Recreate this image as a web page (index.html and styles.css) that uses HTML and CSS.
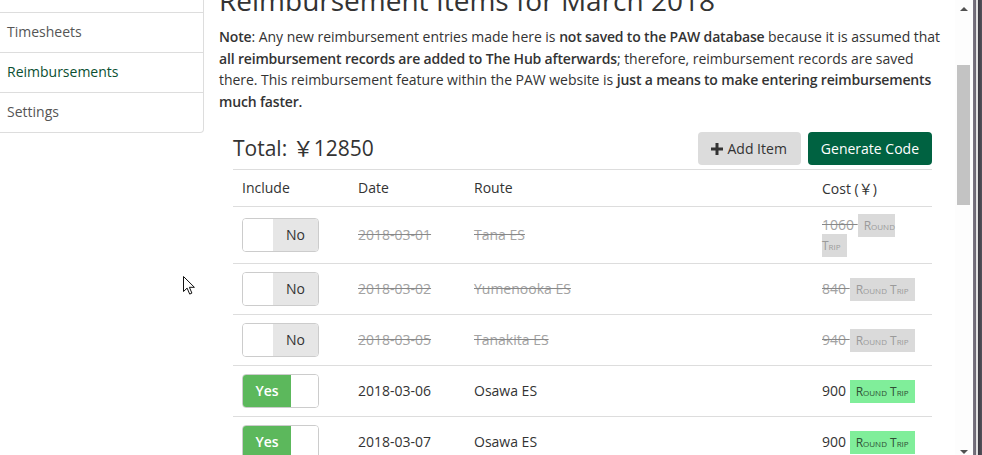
FILE: index.html
```html
<!DOCTYPE html>
<html lang="en">
<head>
<meta charset="utf-8">
<title>Reimbursements</title>
<link rel="stylesheet" href="styles.css">
</head>
<body>
<div class="window">
  <div class="viewport">
    <div class="page">
      <aside class="sidebar">
        <ul class="nav-list">
          <li class="nav-item nav-cut">Dashboard</li>
          <li class="nav-item">Timesheets</li>
          <li class="nav-item active">Reimbursements</li>
          <li class="nav-item last">Settings</li>
        </ul>
      </aside>
      <main class="main">
        <h1 class="title">Reimbursement Items for March 2018</h1>
        <p class="note"><b>Note</b>: Any new reimbursement entries made here is <b>not saved to the PAW database</b> because it is assumed that <b>all reimbursement records are added to The Hub afterwards</b>; therefore, reimbursement records are saved there. This reimbursement feature within the PAW website is <b>just a means to make entering reimbursements much faster.</b></p>
        <section class="panel">
          <div class="toolbar">
            <div class="total">Total: <span class="yen">￥</span>12850</div>
            <div class="actions">
              <button class="btn btn-default"><svg class="plus" viewBox="0 0 12 12" width="12" height="12"><path d="M4.5 0h3v4.5H12v3H7.5V12h-3V7.5H0v-3h4.5z" fill="#333"/></svg>Add Item</button>
              <button class="btn btn-primary">Generate Code</button>
            </div>
          </div>
          <table class="items">
            <thead>
              <tr><th class="c-inc">Include</th><th class="c-date">Date</th><th class="c-route">Route</th><th class="c-cost">Cost (<span class="yen">￥</span>)</th></tr>
            </thead>
            <tbody>
              <tr class="off">
                <td><div class="toggle"><span class="handle"></span><span class="t-off">No</span></div></td>
                <td><s>2018-03-01</s></td>
                <td><s>Tana ES</s></td>
                <td class="cost"><s>1060 </s><span class="label">Round Trip</span></td>
              </tr>
              <tr class="off">
                <td><div class="toggle"><span class="handle"></span><span class="t-off">No</span></div></td>
                <td><s>2018-03-02</s></td>
                <td><s>Yumenooka ES</s></td>
                <td class="cost"><s>840 </s><span class="label">Round Trip</span></td>
              </tr>
              <tr class="off">
                <td><div class="toggle"><span class="handle"></span><span class="t-off">No</span></div></td>
                <td><s>2018-03-05</s></td>
                <td><s>Tanakita ES</s></td>
                <td class="cost"><s>940 </s><span class="label">Round Trip</span></td>
              </tr>
              <tr class="on">
                <td><div class="toggle"><span class="t-on">Yes</span><span class="handle"></span></div></td>
                <td>2018-03-06</td>
                <td>Osawa ES</td>
                <td class="cost">900 <span class="label">Round Trip</span></td>
              </tr>
              <tr class="on">
                <td><div class="toggle"><span class="t-on">Yes</span><span class="handle"></span></div></td>
                <td>2018-03-07</td>
                <td>Osawa ES</td>
                <td class="cost">900 <span class="label">Round Trip</span></td>
              </tr>
            </tbody>
          </table>
        </section>
      </main>
    </div>
    <svg class="cursor" width="13" height="20" viewBox="0 0 13 20"><path d="M0.5 0.5v15l3.6-3.4 2.6 6 2.2-1-2.5-5.8h5z" fill="#fff" stroke="#111" stroke-width="1"/></svg>
  </div>
  <div class="scrollbar">
    <span class="arrow up"></span>
    <span class="thumb"></span>
    <span class="arrow down"></span>
  </div>
  <div class="frame-edge"></div>
</div>
</body>
</html>
```
FILE: styles.css
```css
* { box-sizing: border-box; }
html, body { margin: 0; padding: 0; background: #fff; }
body {
  font-family: "Open Sans", "Noto Sans CJK JP", sans-serif;
  font-size: 14px;
  line-height: 1.42857;
  color: #333;
}
.window { display: flex; width: 982px; height: 455px; overflow: hidden; }
.viewport { position: relative; flex: 0 0 955px; height: 455px; overflow: hidden; }
.page { display: flex; align-items: flex-start; }

.sidebar { flex: 0 0 204px; margin-top: -29px; }
.nav-list { list-style: none; margin: 0; padding: 0; border: 1px solid #ddd; border-left: 0; border-radius: 0 0 4px 0; }
.nav-item { height: 40px; padding: 9px 7px; color: #555; border-top: 1px solid #ddd; }
.nav-item:first-child { border-top: 0; }
.nav-cut { color: transparent; }
.active { color: #0b5032; font-weight: 500; }

.main { flex: 0 0 734px; margin-left: 15px; }
.title { font-size: 28px; font-weight: 400; line-height: 36px; height: 36px; margin: -18px 0 8px; color: #333; white-space: nowrap; }
.note { font-size: 14px; line-height: 21.6px; margin: 0 0 19.5px; letter-spacing: -0.03px; }
.note b { font-weight: 600; letter-spacing: -0.17px; }

.panel { margin: 0 21px 0 14px; }
.toolbar { display: flex; justify-content: space-between; align-items: center; height: 34px; }
.total { font-size: 21px; line-height: 28px; margin-top: -3px; }
.yen { font-family: "Noto Sans CJK JP", sans-serif; font-weight: 400; }
.actions { display: flex; gap: 7px; }
.btn { font-family: inherit; font-size: 14px; height: 33px; line-height: 20px; padding: 6px 13px; border: 0; border-radius: 4px; display: flex; align-items: center; }
.btn-default { background: #dcdcdc; color: #333; padding: 6px 14px 6px 13px; }
.btn-primary { background: #006241; color: #fff; }
.plus { margin-right: 5px; }

.items { width: 100%; border-collapse: collapse; margin-top: 3px; border-top: 1px solid #ddd; }
.items th, .items td { padding: 8px 9px; text-align: left; vertical-align: middle; border-top: 1px solid #ddd; }
.items th { font-weight: 400; border-bottom: 1px solid #ddd; padding-bottom: 7px; }
.items thead th { border-top: 0; }
.c-inc { width: 116px; }
.c-date { width: 116px; }
.c-cost { width: 119px; }
.off td { color: #a3a3a3; }
.off s { text-decoration: line-through; text-decoration-color: #888; }
.cost { padding-right: 14px !important; line-height: 20px; }

.toggle { display: flex; width: 77px; height: 34px; border: 1px solid #ccc; border-radius: 4px; overflow: hidden; }
.handle { flex: 1; background: #fff; }
.t-off { flex: 0 0 45px; background: #e6e6e6; color: #333; text-align: center; line-height: 32px; }
.t-on { flex: 0 0 48px; background: #5cb85c; color: #fff; text-align: center; line-height: 32px; font-weight: 600; }
.off .handle { flex: 0 0 30px; }

.label { font-size: 12px; font-variant: small-caps; padding: 3px 6px 3px; line-height: 0; font-weight: 400; }
.off .label { background: #dadada; color: #9a9a9a; }
.on .label { background: #80ee9a; color: #2f4f35; }

.cursor { position: absolute; left: 183px; top: 276px; }

.scrollbar { position: relative; flex: 0 0 18px; height: 455px; background: #fdfdfd; }
.thumb { position: absolute; left: 2px; top: 65px; width: 13px; height: 140px; background: #c3c3c3; }
.arrow { position: absolute; left: 5px; width: 0; height: 0; border-left: 4px solid transparent; border-right: 4px solid transparent; }
.up { top: 7px; border-bottom: 4px solid #505050; }
.down { top: 450px; border-top: 4px solid #505050; }
.frame-edge { flex: 0 0 9px; background: linear-gradient(to right, #7b7682 0, #6a6672 3px, #e0e0e0 3px, #e0e0e0 5px, #3a3840 5px, #55525c 9px); }
```
